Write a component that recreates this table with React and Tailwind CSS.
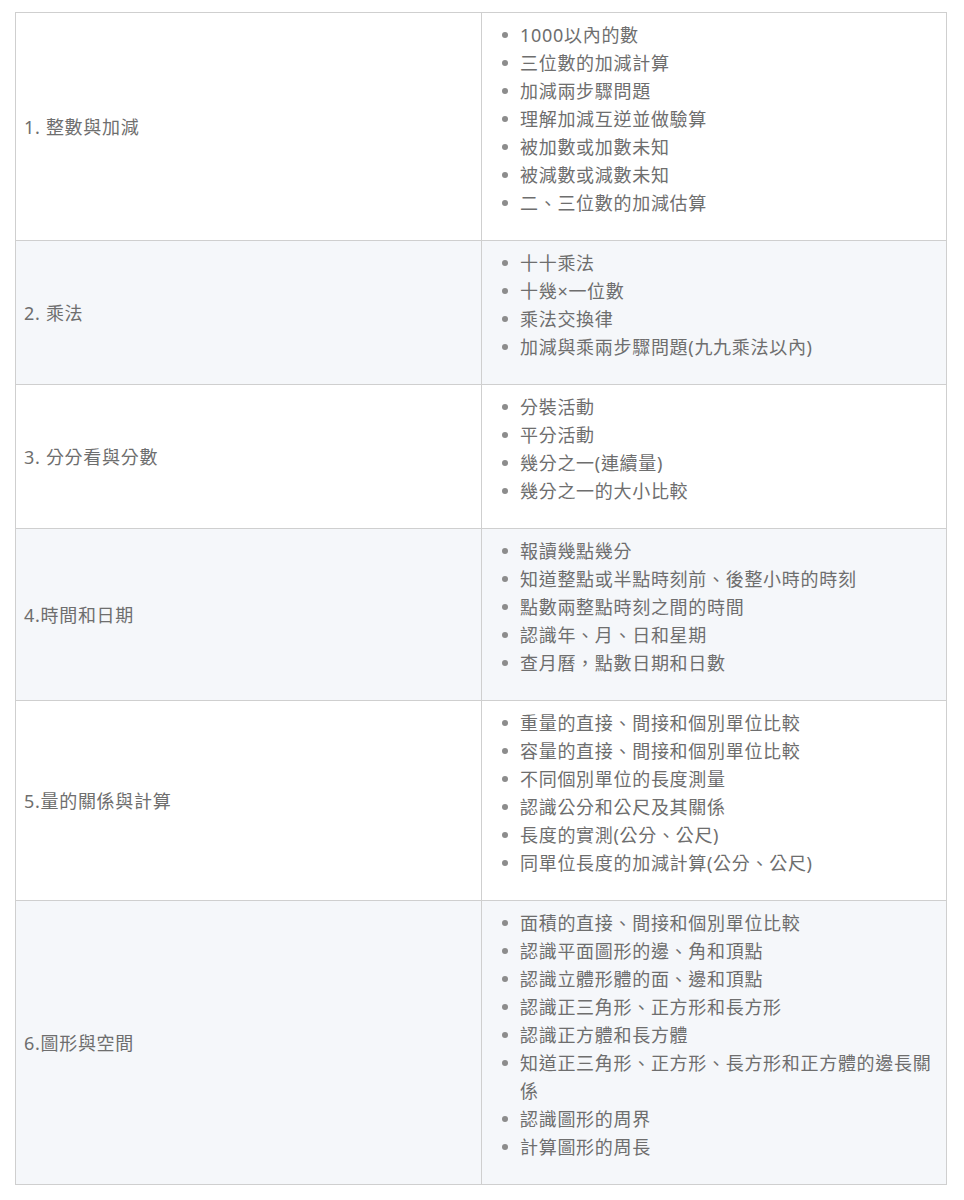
import React from "react";

const rows = [
  {
    title: "1. 整數與加減",
    items: [
      "1000以內的數",
      "三位數的加減計算",
      "加減兩步驟問題",
      "理解加減互逆並做驗算",
      "被加數或加數未知",
      "被減數或減數未知",
      "二、三位數的加減估算",
    ],
  },
  {
    title: "2. 乘法",
    items: ["十十乘法", "十幾×一位數", "乘法交換律", "加減與乘兩步驟問題(九九乘法以內)"],
  },
  {
    title: "3. 分分看與分數",
    items: ["分裝活動", "平分活動", "幾分之一(連續量)", "幾分之一的大小比較"],
  },
  {
    title: "4.時間和日期",
    items: [
      "報讀幾點幾分",
      "知道整點或半點時刻前、後整小時的時刻",
      "點數兩整點時刻之間的時間",
      "認識年、月、日和星期",
      "查月曆，點數日期和日數",
    ],
  },
  {
    title: "5.量的關係與計算",
    items: [
      "重量的直接、間接和個別單位比較",
      "容量的直接、間接和個別單位比較",
      "不同個別單位的長度測量",
      "認識公分和公尺及其關係",
      "長度的實測(公分、公尺)",
      "同單位長度的加減計算(公分、公尺)",
    ],
  },
  {
    title: "6.圖形與空間",
    items: [
      "面積的直接、間接和個別單位比較",
      "認識平面圖形的邊、角和頂點",
      "認識立體形體的面、邊和頂點",
      "認識正三角形、正方形和長方形",
      "認識正方體和長方體",
      "知道正三角形、正方形、長方形和正方體的邊長關係",
      "認識圖形的周界",
      "計算圖形的周長",
    ],
  },
];

const App = () => {
  return (
    <div
      lang="zh-Hant-TW"
      className="bg-white pt-3 pl-[15px] min-h-[1200px]"
      style={{ fontFamily: '"Noto Sans", "Noto Sans CJK TC", sans-serif' }}>
      <table className="w-[932px] border-collapse table-fixed text-[18px] leading-7 tracking-[0.7px] text-[#6e6e6e]">
        <tbody>
          {rows.map((row, i) => (
            <tr key={i} className={i % 2 === 1 ? "bg-[#f5f7fa]" : "bg-white"}>
              <td className="w-[466px] border border-[#cfcfcf] px-2 align-middle">
                {row.title}
              </td>
              <td className="border border-[#cfcfcf] px-2 pt-2 pb-[23px]">
                <ul>
                  {row.items.map((item, j) => (
                    <li key={j} className="flex items-start">
                      <span className="ml-3 mr-3 mt-[11px] w-[6px] h-[6px] shrink-0 rounded-full bg-[#8c8c8c]" />
                      <span>{item}</span>
                    </li>
                  ))}
                </ul>
              </td>
            </tr>
          ))}
        </tbody>
      </table>
    </div>
  );
};

export default App;
